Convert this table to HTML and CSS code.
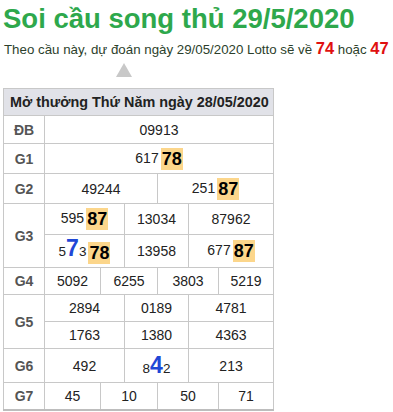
FILE: index.html
```html
<!DOCTYPE html>
<html lang="vi">
<head>
<meta charset="utf-8">
<title>Soi cầu song thủ 29/5/2020</title>
<link rel="stylesheet" href="styles.css">
</head>
<body>
<div class="page">
  <h1 class="title">Soi cầu song thủ 29/5/2020</h1>
  <p class="lead">Theo cầu này, dự đoán ngày 29/05/2020 Lotto sẽ về <b class="red">74</b> hoặc <b class="red">47</b></p>
  <div class="arrow"></div>
  <table class="kq">
    <colgroup>
      <col class="c0"><col class="c1"><col class="c2"><col class="c3"><col class="c4"><col class="c5"><col class="c6">
    </colgroup>
    <tr class="r-head"><th colspan="7">Mở thưởng Thứ Năm ngày 28/05/2020</th></tr>
    <tr class="r-db"><td class="lbl">ĐB</td><td colspan="6">09913</td></tr>
    <tr class="r-hl"><td class="lbl">G1</td><td colspan="6">617<span class="hl">78</span></td></tr>
    <tr class="r-hl"><td class="lbl">G2</td><td colspan="3">49244</td><td colspan="3">251<span class="hl">87</span></td></tr>
    <tr class="r-g3a"><td class="lbl" rowspan="2">G3</td><td colspan="2">595<span class="hl">87</span></td><td colspan="2">13034</td><td colspan="2">87962</td></tr>
    <tr class="r-g3b"><td colspan="2"><span class="sm">5</span><span class="bl">7</span><span class="sm">3</span><span class="hl">78</span></td><td colspan="2">13958</td><td colspan="2">677<span class="hl">87</span></td></tr>
    <tr class="r-n"><td class="lbl">G4</td><td>5092</td><td colspan="2">6255</td><td colspan="2">3803</td><td>5219</td></tr>
    <tr class="r-n"><td class="lbl" rowspan="2">G5</td><td colspan="2">2894</td><td colspan="2">0189</td><td colspan="2">4781</td></tr>
    <tr class="r-n"><td colspan="2">1763</td><td colspan="2">1380</td><td colspan="2">4363</td></tr>
    <tr class="r-g6"><td class="lbl">G6</td><td colspan="2">492</td><td colspan="2"><span class="sm">8</span><span class="bl">4</span><span class="sm">2</span></td><td colspan="2">213</td></tr>
    <tr class="r-n"><td class="lbl">G7</td><td>45</td><td colspan="2">10</td><td colspan="2">50</td><td>71</td></tr>
  </table>
</div>
</body>
</html>
```
FILE: styles.css
```css
html, body {
  margin: 0;
  padding: 0;
  background: #fff;
}
body {
  font-family: "Liberation Sans", Arial, sans-serif;
  color: #222;
}
.page {
  padding: 3px 3px 0 3px;
}
.title {
  margin: 0;
  font-size: 27.5px;
  line-height: 31px;
  font-weight: bold;
  color: #2ea84c;
}
.lead {
  margin: 5px 0 0 1px;
  font-size: 13.3px;
  line-height: 18px;
  color: #2c3f2c;
}
.red {
  color: #e01010;
  font-size: 16.5px;
}
.arrow {
  width: 0;
  height: 0;
  margin: 4px 0 0 113px;
  border-left: 8px solid transparent;
  border-right: 8px solid transparent;
  border-bottom: 14px solid #c8c8c8;
}
.kq {
  margin-top: 11px;
  border-collapse: collapse;
  table-layout: fixed;
  width: 271px;
  border-bottom: 2px solid #bdbdbd;
}
.c0 { width: 41px; }
.c1 { width: 56px; }
.c2 { width: 24px; }
.c3 { width: 33px; }
.c4 { width: 31px; }
.c5 { width: 30px; }
.c6 { width: 55px; }
.kq th, .kq td {
  border: 1px solid #c8c8c8;
  padding: 0;
  text-align: center;
  vertical-align: middle;
  font-size: 14px;
  white-space: nowrap;
}
.kq th {
  background: #e1e2e8;
  text-align: left;
  padding-left: 6px;
  font-weight: bold;
  font-size: 14.4px;
  color: #222;
}
.kq td.lbl {
  font-weight: bold;
  color: #555;
}
.r-head th { height: 26px; }
.r-db td { height: 27px; }
.r-hl td { height: 29px; }
.r-g3a td { height: 30px; }
.r-g3b td { height: 32px; }
.r-n td { height: 26px; }
.r-g6 td { height: 33px; }
.hl {
  display: inline-block;
  margin-left: 2px;
  background: #fcd68b;
  color: #000;
  font-weight: bold;
  font-size: 18px;
  line-height: 22px;
  padding: 0 1px;
  vertical-align: middle;
}
.sm {
  font-size: 13.5px;
}
.bl {
  color: #1f47d6;
  font-weight: bold;
  font-size: 23px;
  line-height: 20px;
}
```
